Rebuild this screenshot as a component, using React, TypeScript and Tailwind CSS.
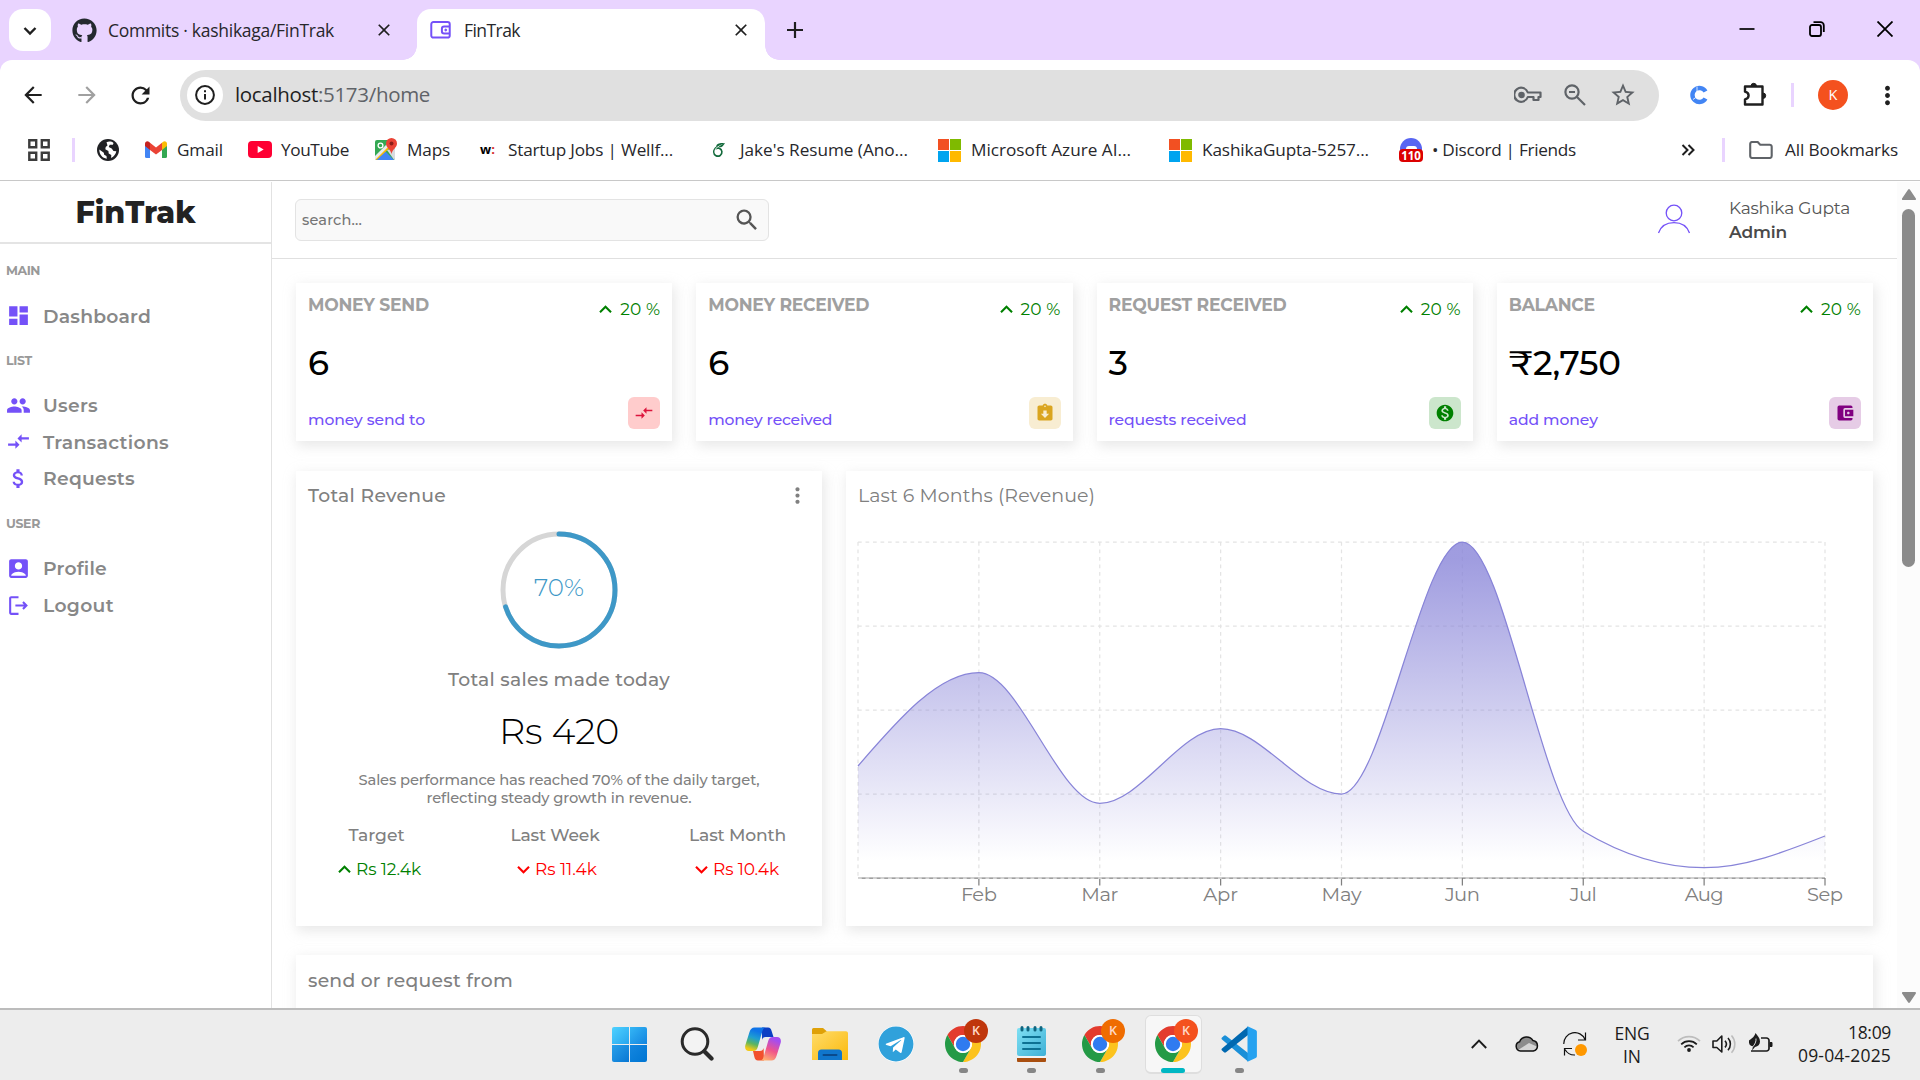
import { useLayoutEffect, useRef, useState, type ReactNode } from "react";
import {
  MdAccountBalanceWallet,
  MdAccountBox,
  MdArrowBack,
  MdArrowForward,
  MdAssignmentReturned,
  MdAttachMoney,
  MdClose,
  MdCompareArrows,
  MdDashboard,
  MdGroup,
  MdKeyboardArrowDown,
  MdKeyboardArrowUp,
  MdMonetizationOn,
  MdMoreVert,
  MdRefresh,
  MdSearch,
  MdStarBorder,
} from "react-icons/md";
import { FaGithub, FaTelegram } from "react-icons/fa";
import { SiOverleaf } from "react-icons/si";

/** One line of text whose letter spacing is adjusted so that it spans `w` pixels. */
function Fit({ w, className = "", children }: { w: number; className?: string; children: string }) {
  const ref = useRef<HTMLSpanElement>(null);
  const [spacing, setSpacing] = useState(0);
  useLayoutEffect(() => {
    const el = ref.current;
    if (el && children.length > 1) {
      setSpacing((w - el.getBoundingClientRect().width) / children.length);
    }
  }, [w, children]);
  return (
    <span
      ref={ref}
      className={`inline-block whitespace-pre leading-none ${className}`}
      style={{ letterSpacing: spacing }}
    >
      {children}
    </span>
  );
}

/* ---------- browser chrome ---------- */

function WalletFavicon() {
  return (
    <svg viewBox="0 0 24 20" className="h-[18px] w-[22px]" fill="none" stroke="#7451f8" strokeWidth="2.2">
      <rect x="1.2" y="1.2" width="20.5" height="17.2" rx="2.4" />
      <path d="M22 6h-6.5a2.5 2.5 0 0 0-2.5 2.500v3a2.500 2.500 0 0 0 2.500 2.500H22" />
      <circle cx="17.300" cy="10" r="1.100" fill="#7451f8" strokeWidth="1" />
    </svg>
  );
}

function TabStrip() {
  return (
    <div className="flex h-[60px] bg-[#e9d4ff]">
      <div className="ml-[9px] mt-[9px] flex h-[42px] w-[42px] items-center justify-center rounded-[14px] bg-white">
        <svg viewBox="0 0 14 10" className="mt-[1px] h-[10px] w-[14px]" fill="none" stroke="#1f1f1f" strokeWidth="2.4">
          <path d="M1.500 2l5.500 5.500L12.500 2" />
        </svg>
      </div>
      <div className="ml-[21px] flex h-[60px] w-[329px] items-center">
        <FaGithub className="h-[25px] w-[25px] text-[#24292f]" />
        <Fit w={226} className="ml-[11px] mt-[2px] text-[17.500px] text-[#27272b]">Commits · kashikaga/FinTrak</Fit>
        <MdClose className="ml-[40px] h-[20px] w-[20px] text-[#1f1f1f]" />
      </div>
      <div className="relative ml-[16px] mt-[9px] flex h-[51px] w-[348px] items-center rounded-t-[14px] bg-white">
        <div className="absolute -left-[14px] bottom-0 h-[14px] w-[14px] bg-[radial-gradient(circle_at_0_0,#e9d4ff_13.500px,#fff_14px)]" />
        <div className="absolute -right-[14px] bottom-0 h-[14px] w-[14px] bg-[radial-gradient(circle_at_100%_0,#e9d4ff_13.500px,#fff_14px)]" />
        <div className="-mt-[9px] ml-[13px] flex w-full items-center">
          <WalletFavicon />
          <Fit w={56} className="ml-[12px] mt-[2px] text-[17.500px] text-[#27272b]">FinTrak</Fit>
          <MdClose className="ml-[211px] h-[20px] w-[20px] text-[#1f1f1f]" />
        </div>
      </div>
      <svg viewBox="0 0 16 16" className="ml-[22px] mt-[22px] h-[16px] w-[16px]" stroke="#1f1f1f" strokeWidth="2.200">
        <path d="M8 0v16M0 8h16" />
      </svg>
      <div className="ml-auto mr-[27px] mt-[21px] flex items-start">
        <svg viewBox="0 0 16 16" className="h-[16px] w-[16px]" stroke="#000" strokeWidth="1.700">
          <path d="M0.500 8h15" />
        </svg>
        <svg viewBox="0 0 16 16" className="ml-[54px] h-[16px] w-[16px]" fill="none" stroke="#000" strokeWidth="1.800">
          <rect x="1" y="4" width="11" height="11" rx="2" />
          <path d="M4.500 1.200h7a3.300 3.300 0 0 1 3.300 3.300v6.500" />
        </svg>
        <svg viewBox="0 0 16 16" className="ml-[52px] h-[16px] w-[16px]" stroke="#000" strokeWidth="1.800">
          <path d="M0.500 0.500l15 15M15.500 0.500l-15 15" />
        </svg>
      </div>
    </div>
  );
}

function Toolbar() {
  return (
    <div className="bg-[#e9d4ff]">
      <div className="flex h-[70px] items-center rounded-t-[12px] bg-white">
        <MdArrowBack className="ml-[20px] h-[26px] w-[26px] text-[#1f1f1f]" />
        <MdArrowForward className="ml-[28px] h-[26px] w-[26px] text-[#a0a0a0]" />
        <MdRefresh className="ml-[27px] h-[27px] w-[27px] text-[#1f1f1f]" />
        <div className="ml-[26px] flex h-[51px] w-[1479px] items-center rounded-full bg-[#e0e0e0]">
          <div className="ml-[7px] flex h-[36px] w-[36px] items-center justify-center rounded-full bg-white">
            <svg viewBox="0 0 20 20" className="h-[20px] w-[20px]" fill="none" stroke="#1f1f1f" strokeWidth="2">
              <circle cx="10" cy="10" r="8.900" />
              <path d="M10 9v5.500M10 5.300v2" />
            </svg>
          </div>
          <div className="mb-[2px] ml-[12px] flex items-center text-[20.500px]">
            <Fit w={83} className="text-[#1f1f1f]">localhost</Fit>
            <Fit w={112} className="text-[#5f6368]">:5173/home</Fit>
          </div>
          <svg viewBox="0 0 28 18" className="ml-auto h-[18px] w-[28px]" fill="none" stroke="#5f6368" strokeWidth="2.200">
            <path d="M13.800 6.500H26.500v4.500h-2v3h-5v-3h-5.700A7 7 0 1 1 13.800 6.500z" strokeLinejoin="round" />
            <circle cx="7.500" cy="9" r="2.200" fill="#5f6368" />
          </svg>
          <svg viewBox="0 0 22 22" className="ml-[22px] h-[22px] w-[22px]" fill="none" stroke="#5f6368" strokeWidth="2.200">
            <circle cx="8" cy="8" r="6.600" />
            <path d="M13 13l8 8M5 8h6" />
          </svg>
          <MdStarBorder className="ml-[23px] mr-[22px] h-[28px] w-[28px] text-[#5f6368]" />
        </div>
        <svg viewBox="0 0 20 20" className="ml-[30px] h-[20px] w-[20px]" fill="none" stroke="#4285f4" strokeWidth="4.400">
          <path d="M16.500 6.500A7 7 0 1 0 16.500 13.500" />
          <path d="M8 1.500v5M4 14.500l3.500-2.500" stroke="#fff" strokeWidth="0.800" />
        </svg>
        <svg viewBox="0 0 26 26" className="ml-[33px] h-[26px] w-[26px]" fill="none" stroke="#1f1f1f" strokeWidth="2.400">
          <path d="M3 4.500h17.500v18H3v-5.200c2.300-.5 3.600-2 3.600-3.800S5.300 10.200 3 9.700z" strokeLinejoin="round" />
          <path d="M9 4a2.700 2.700 0 0 1 5.400 0zM21 11a2.700 2.700 0 0 1 0 5.400z" fill="#1f1f1f" strokeWidth="1" />
        </svg>
        <div className="ml-[23px] h-[24px] w-[3px] bg-[#e9d4ff]" />
        <div className="ml-[24px] flex h-[30px] w-[30px] items-center justify-center rounded-full bg-[#f4511e] text-[14.500px] text-white">K</div>
        <MdMoreVert className="ml-[25px] h-[29px] w-[29px] text-[#1f1f1f]" />
      </div>
    </div>
  );
}

function MicrosoftIcon() {
  return (
    <div className="grid h-[23px] w-[23px] grid-cols-2 gap-[1px]">
      <div className="bg-[#f25022]" />
      <div className="bg-[#7fba00]" />
      <div className="bg-[#00a4ef]" />
      <div className="bg-[#ffb900]" />
    </div>
  );
}

function Bookmark({ className, icon, gap, w, label }: { className: string; icon: ReactNode; gap: string; w: number; label: string }) {
  return (
    <div className={`flex shrink-0 items-center ${className}`}>
      {icon}
      <Fit w={w} className={`text-[17.200px] text-[#27272b] ${gap}`}>{label}</Fit>
    </div>
  );
}

function BookmarkBar() {
  return (
    <div className="flex h-[51px] items-center border-b border-[#c8c8c8] bg-white pb-[10px]">
      <svg viewBox="0 0 22 22" className="ml-[28px] h-[22px] w-[22px] shrink-0" fill="none" stroke="#3c3c3c" strokeWidth="2.400">
        <path d="M1.300 1.300h6.900v6.900H1.300zM13.800 1.300h6.900v6.900h-6.900zM1.300 13.800h6.900v6.900H1.300zM13.800 13.800h6.900v6.900h-6.900z" />
      </svg>
      <div className="ml-[22px] h-[24px] w-[3px] shrink-0 bg-[#e9d4ff]" />
      <svg viewBox="0 0 22 22" className="ml-[22px] h-[22px] w-[22px] shrink-0">
        <circle cx="11" cy="11" r="11" fill="#202124" />
        <path d="M9.500 3.200c2.500-1 5.300-.7 7 .8l-.6 1.800h-3.200l-1 2.200 3 1.500 1.800 2.500 2.800.3c-.4 2.800-2.300 5.300-5.200 6.600l.2-2.800-2.600-1.500-.3-2.600-3.100-1.800.4-2.300 1.800-1.300z" fill="#fff" />
        <path d="M2.300 10.500l4.500 3.200.4 2 2.300 1.300.3 2.700C5.500 19.200 2.200 15.500 2.300 10.500z" fill="#fff" />
      </svg>
      <Bookmark
        className="ml-[26px]"
        gap="ml-[10px]"
        w={46}
        label="Gmail"
        icon={
          <svg viewBox="0 0 22 17" className="h-[17px] w-[22px]">
            <path d="M0 2.500v13A1.500 1.500 0 0 0 1.500 17H5V6.500z" fill="#4285f4" />
            <path d="M17 17h3.500a1.500 1.500 0 0 0 1.500-1.500v-13l-5 4z" fill="#34a853" />
            <path d="M17 1.800V9l5-4V2.500c0-2-2.300-3.100-3.900-1.800z" fill="#fbbc04" />
            <path d="M5 9V1.800l6 4.600 6-4.600V9l-6 4.600z" fill="#ea4335" />
            <path d="M0 2.500V5l5 4V1.800L3.900.7C2.300-.6 0 .5 0 2.500z" fill="#c5221f" />
          </svg>
        }
      />
      <Bookmark
        className="ml-[25px]"
        gap="ml-[9px]"
        w={68}
        label="YouTube"
        icon={
          <svg viewBox="0 0 24 17" className="h-[17px] w-[24px]">
            <rect width="24" height="17" rx="4" fill="#ff0033" />
            <path d="M9.700 5l6 3.500-6 3.500z" fill="#fff" />
          </svg>
        }
      />
      <Bookmark
        className="ml-[26px]"
        gap="ml-[10px]"
        w={43}
        label="Maps"
        icon={
          <svg viewBox="0 0 22 24" className="h-[24px] w-[22px]">
            <rect y="2" width="20" height="20" rx="2" fill="#34a853" />
            <path d="M12 12l8-2v10a2 2 0 0 1-1 1.700z" fill="#d8dce0" />
            <path d="M10 13L1 22h18z" fill="#4285f4" />
            <path d="M0 20L16 4l3 2L1.500 22A2 2 0 0 1 0 20z" fill="#fbbc04" />
            <path d="M0 18l13-13 2 2L0 22z" fill="#e8eaed" />
            <circle cx="5.500" cy="7.500" r="2.400" fill="none" stroke="#fff" strokeWidth="1.300" />
            <path d="M16.500 0A5.500 5.500 0 0 0 11 5.500c0 4 4.500 5.500 5.500 10.500C17.500 11 22 9.500 22 5.500A5.500 5.500 0 0 0 16.500 0z" fill="#ea4335" />
            <circle cx="16.500" cy="5.500" r="2" fill="#8c1d18" />
          </svg>
        }
      />
      <Bookmark
        className="ml-[30px]"
        gap="ml-[12px]"
        w={165}
        label="Startup Jobs | Wellf..."
        icon={
          <div className="w-[16px] whitespace-nowrap text-[13px] font-bold leading-none text-black">
            w<span className="text-[#d42a2a]">:</span>
          </div>
        }
      />
      <Bookmark
        className="ml-[39px]"
        gap="ml-[14px]"
        w={168}
        label="Jake's Resume (Ano..."
        icon={<SiOverleaf className="h-[16px] w-[14px] text-[#11693a]" />}
      />
      <Bookmark className="ml-[30px]" gap="ml-[10px]" w={160} label="Microsoft Azure AI..." icon={<MicrosoftIcon />} />
      <Bookmark className="ml-[38px]" gap="ml-[10px]" w={167} label="KashikaGupta-5257..." icon={<MicrosoftIcon />} />
      <Bookmark
        className="ml-[30px]"
        gap="ml-[9px]"
        w={144}
        label="• Discord | Friends"
        icon={
          <div className="flex h-[24px] w-[24px] flex-col items-center">
            <div className="flex h-[12px] w-[22px] items-end justify-center rounded-t-full bg-[#5865f2]">
              <div className="h-[4px] w-[11px] rounded-t-[3px] bg-white" />
            </div>
            <div className="-mt-[1px] flex h-[14px] w-[24px] items-center justify-center rounded-[4px] bg-[#dc0000] text-[11.500px] font-bold leading-none text-white">110</div>
          </div>
        }
      />
      <svg viewBox="0 0 14 12" className="ml-[105px] h-[12px] w-[14px] shrink-0" fill="none" stroke="#1f1f1f" strokeWidth="2">
        <path d="M1.500 1l5 5-5 5M7.500 1l5 5-5 5" />
      </svg>
      <div className="ml-[27px] h-[24px] w-[3px] shrink-0 bg-[#e9d4ff]" />
      <Bookmark
        className="ml-[24px]"
        gap="ml-[12px]"
        w={113}
        label="All Bookmarks"
        icon={
          <svg viewBox="0 0 24 18" className="h-[18px] w-[24px]" fill="none" stroke="#5f6368" strokeWidth="2.100">
            <path d="M1.200 15V3a2 2 0 0 1 2-2h5.500l2.500 2.700h9.500a2 2 0 0 1 2 2V15a2 2 0 0 1-2 2H3.200a2 2 0 0 1-2-2z" />
          </svg>
        }
      />
    </div>
  );
}

/* ---------- app: sidebar and navbar ---------- */

function SideTitle({ h, w, children }: { h: string; w: number; children: string }) {
  return (
    <div className={`flex items-center pl-[6px] ${h}`}>
      <Fit w={w} className="text-[12.500px] font-bold text-[#999]">{children}</Fit>
    </div>
  );
}

function SideItem({ h, w, icon, children }: { h: string; w: number; icon: ReactNode; children: string }) {
  return (
    <div className={`flex items-center pl-[6px] ${h}`}>
      <span className="-mt-[1px] flex w-[37px] text-[#7451f8]">{icon}</span>
      <Fit w={w} className="mt-[2px] text-[18.750px] font-semibold text-[#888]">{children}</Fit>
    </div>
  );
}

function Sidebar() {
  const icon = "h-[25px] w-[25px]";
  return (
    <aside className="w-[272px] shrink-0 border-r border-[#e2e2e2]">
      <div className="flex h-[62px] items-center justify-center border-b-2 border-[#e4e4e4] pt-[1px]">
        <Fit w={120} className="text-[30px] font-extrabold text-[#222]">FinTrak</Fit>
      </div>
      <SideTitle h="h-[54px]" w={34}>MAIN</SideTitle>
      <SideItem h="h-[36px]" w={108} icon={<MdDashboard className={icon} />}>Dashboard</SideItem>
      <SideTitle h="h-[54px]" w={26}>LIST</SideTitle>
      <SideItem h="h-[35px]" w={55} icon={<MdGroup className={icon} />}>Users</SideItem>
      <SideItem h="h-[38px]" w={126} icon={<MdCompareArrows className={icon} />}>Transactions</SideItem>
      <SideItem h="h-[35px]" w={92} icon={<MdAttachMoney className={icon} />}>Requests</SideItem>
      <SideTitle h="h-[56px]" w={34}>USER</SideTitle>
      <SideItem h="h-[33px]" w={64} icon={<MdAccountBox className={icon} />}>Profile</SideItem>
      <SideItem
        h="h-[41px]"
        w={71}
        icon={
          <svg viewBox="0 0 24 24" className={icon} fill="currentColor">
            <path d="m17 8-1.410 1.410L17.170 11H9v2h8.170l-1.580 1.580L17 16l4-4-4-4zM5 5h7V3H5c-1.100 0-2 .9-2 2v14c0 1.100.9 2 2 2h7v-2H5V5z" />
          </svg>
        }
      >
        Logout
      </SideItem>
    </aside>
  );
}

function Navbar() {
  return (
    <div className="flex h-[77px] items-center border-b border-[#e0e0e0] pl-[23px]">
      <div className="flex h-[42px] w-[474px] items-center justify-between rounded-[6px] border border-[#e3e3e3] bg-[#f9f9f9] pl-[6px] pr-[7px]">
        <Fit w={60} className="text-[14.500px] font-medium text-[#757575]">search...</Fit>
        <MdSearch className="h-[28px] w-[28px] text-[#555]" />
      </div>
      <svg viewBox="0 0 34 30" className="ml-auto mt-[-3px] h-[30px] w-[34px]" fill="none" stroke="#7451f8" strokeWidth="1.300">
        <circle cx="17" cy="9" r="7.800" />
        <path d="M1.500 29C4 22 10 18.700 17 18.700S30 22 32.500 29" />
      </svg>
      <div className="ml-[38px] flex h-[48px] w-[168px] flex-col items-start">
        <Fit w={121} className="mt-[4px] text-[17px] text-[#555]">Kashika Gupta</Fit>
        <Fit w={58} className="mt-[7px] text-[17px] font-semibold text-[#4a4a4a]">Admin</Fit>
      </div>
    </div>
  );
}

/* ---------- app: widgets ---------- */

const cardShadow = "shadow-[2px_4px_12px_1px_rgba(190,190,190,0.36)]";

function Widget(props: { title: string; titleW: number; count: string; countW: number; link: string; linkW: number; tone: string; icon: ReactNode }) {
  return (
    <div className={`flex h-[158px] flex-1 justify-between bg-white px-[12px] ${cardShadow}`}>
      <div className="flex flex-col">
        <div className="mt-[12px] flex h-[20px] items-center">
          <Fit w={props.titleW} className="text-[17.200px] font-bold text-[#a0a0a0]">{props.title}</Fit>
        </div>
        <div className="mt-[28px] flex h-[40px] items-center">
          <Fit w={props.countW} className="text-[34px] font-medium text-black">{props.count}</Fit>
        </div>
        <div className="mt-[28px] flex h-[18px] items-center">
          <Fit w={props.linkW} className="text-[15.600px] font-medium text-[#7451f8]">{props.link}</Fit>
        </div>
      </div>
      <div className="flex flex-col items-end">
        <div className="mt-[14px] flex h-[25px] items-center text-[#008000]">
          <MdKeyboardArrowUp className="h-[25px] w-[25px]" />
          <Fit w={40} className="-mt-[1px] ml-[2px] text-[17px]">20 %</Fit>
        </div>
        <div className={`mt-[75px] flex h-[32px] w-[32px] items-center justify-center rounded-[6px] ${props.tone}`}>{props.icon}</div>
      </div>
    </div>
  );
}

function Widgets() {
  const icon = "h-[20px] w-[20px]";
  return (
    <div className="flex gap-[24px] pl-[24px] pr-[24px] pt-[24px]">
      <Widget title="MONEY SEND" titleW={121} count="6" countW={21} link="money send to" linkW={117} tone="bg-[#ffcccc] text-[#dc143c]" icon={<MdCompareArrows className={icon} />} />
      <Widget title="MONEY RECEIVED" titleW={161} count="6" countW={21} link="money received" linkW={124} tone="bg-[#f8edd2] text-[#daa520]" icon={<MdAssignmentReturned className={icon} />} />
      <Widget title="REQUEST RECEIVED" titleW={178} count="3" countW={20} link="requests received" linkW={138} tone="bg-[#cce6cc] text-[#008000]" icon={<MdMonetizationOn className={icon} />} />
      <Widget title="BALANCE" titleW={86} count="₹2,750" countW={112} link="add money" linkW={89} tone="bg-[#e6cce6] text-[#800080]" icon={<MdAccountBalanceWallet className={icon} />} />
    </div>
  );
}

/* ---------- app: revenue card ---------- */

function Ring() {
  const r = 56;
  const length = 2 * Math.PI * r;
  return (
    <div className="relative mt-[10px] h-[118px] w-[118px]">
      <svg viewBox="0 0 118 118" className="h-[118px] w-[118px] -rotate-90" fill="none" strokeWidth="5">
        <circle cx="59" cy="59" r={r} stroke="#d6d6d6" />
        <circle cx="59" cy="59" r={r} stroke="#3e98c7" strokeLinecap="round" strokeDasharray={`${length * 0.7} ${length}`} />
      </svg>
      <div className="absolute inset-0 flex items-center justify-center pb-[5px]">
        <Fit w={50} className="text-[24.500px] font-light text-[#3e98c7]">70%</Fit>
      </div>
    </div>
  );
}

function Summary(props: { className: string; title: string; titleW: number; value: string; valueW: number; up?: boolean }) {
  return (
    <div className={`flex flex-col ${props.className}`}>
      <div className="flex h-[24px] items-center justify-center">
        <Fit w={props.titleW} className="text-[17.200px] font-medium text-[#808080]">{props.title}</Fit>
      </div>
      <div className={`mt-[10px] flex h-[24px] items-center ${props.up ? "text-[#008000]" : "text-[#ff0000]"}`}>
        {props.up ? <MdKeyboardArrowUp className="h-[25px] w-[25px] shrink-0" /> : <MdKeyboardArrowDown className="h-[25px] w-[25px] shrink-0" />}
        <Fit w={props.valueW} className="-ml-[1px] text-[17px]">{props.value}</Fit>
      </div>
    </div>
  );
}

function RevenueCard() {
  return (
    <div className={`flex h-[455px] w-[526px] flex-col bg-white ${cardShadow}`}>
      <div className="flex h-[50px] items-center justify-between pl-[12px] pr-[12px]">
        <Fit w={138} className="text-[18.750px] font-medium text-[#808080]">Total Revenue</Fit>
        <MdMoreVert className="-mt-[2px] h-[25px] w-[25px] text-[#808080]" />
      </div>
      <div className="flex flex-col items-center">
        <Ring />
        <div className="flex h-[62px] items-center">
          <Fit w={222} className="text-[18.750px] font-medium text-[#808080]">Total sales made today</Fit>
        </div>
        <div className="flex h-[41px] items-center">
          <Fit w={120} className="text-[36.500px] font-light text-black">Rs 420</Fit>
        </div>
        <div className="mt-[19px] flex flex-col items-center">
          <div className="flex h-[18px] items-center">
            <Fit w={401} className="text-[14.700px] font-medium text-[#808080]">Sales performance has reached 70% of the daily target,</Fit>
          </div>
          <div className="flex h-[18px] items-center">
            <Fit w={265} className="text-[14.700px] font-medium text-[#808080]">reflecting steady growth in revenue.</Fit>
          </div>
        </div>
      </div>
      <div className="mt-[16px] flex">
        <Summary className="ml-[36px] w-[89px]" title="Target" titleW={56} value="Rs 12.4k" valueW={65} up />
        <Summary className="ml-[90px] w-[88px]" title="Last Week" titleW={89} value="Rs 11.4k" valueW={62} />
        <Summary className="ml-[90px] w-[97px]" title="Last Month" titleW={97} value="Rs 10.4k" valueW={66} />
      </div>
    </div>
  );
}

/* ---------- app: area chart ---------- */

const months = [
  { name: "", total: 1200, w: 0 },
  { name: "Feb", total: 2200, w: 36 },
  { name: "Mar", total: 800, w: 37 },
  { name: "Apr", total: 1600, w: 35 },
  { name: "May", total: 900, w: 40 },
  { name: "Jun", total: 3600, w: 35 },
  { name: "Jul", total: 500, w: 27 },
  { name: "Aug", total: 110, w: 39 },
  { name: "Sep", total: 450, w: 36 },
];

/** Monotone cubic curve through the points. */
function monotonePath(p: { x: number; y: number }[]) {
  const n = p.length;
  const slope = (i: number) => (p[i + 1].y - p[i].y) / (p[i + 1].x - p[i].x);
  const t: number[] = [];
  for (let i = 1; i < n - 1; i++) {
    const a = slope(i - 1);
    const b = slope(i);
    t[i] = (Math.sign(a) + Math.sign(b)) * Math.min(Math.abs(a), Math.abs(b), Math.abs((a + b) / 4)) || 0;
  }
  t[0] = (3 * slope(0) - t[1]) / 2;
  t[n - 1] = (3 * slope(n - 2) - t[n - 2]) / 2;
  let d = `M${p[0].x} ${p[0].y}`;
  for (let i = 0; i < n - 1; i++) {
    const h = (p[i + 1].x - p[i].x) / 3;
    d += `C${p[i].x + h} ${p[i].y + t[i] * h} ${p[i + 1].x - h} ${p[i + 1].y - t[i + 1] * h} ${p[i + 1].x} ${p[i + 1].y}`;
  }
  return d;
}

function AreaChart() {
  const left = 12;
  const right = 979;
  const top = 10;
  const bottom = 346;
  const xs = months.map((_, i) => left + ((right - left) * i) / 8);
  const points = months.map((m, i) => ({ x: xs[i], y: bottom - ((bottom - top) * m.total) / 3600 }));
  const line = monotonePath(points);
  return (
    <svg viewBox="0 0 1027 390" className="h-[390px] w-[1027px]">
      <defs>
        <linearGradient id="total" x1="0" y1="0" x2="0" y2="1">
          <stop offset="5%" stopColor="#8884d8" stopOpacity="0.8" />
          <stop offset="95%" stopColor="#8884d8" stopOpacity="0" />
        </linearGradient>
      </defs>
      <path d={`M${left} ${bottom}H${right}`} stroke="#808080" strokeWidth="1.250" />
      {xs.slice(1).map((x) => (
        <path key={x} d={`M${x} ${bottom}v7.500`} stroke="#808080" strokeWidth="1.250" />
      ))}
      <g stroke="#e4e4e4" strokeWidth="1.250" strokeDasharray="3.750 3.750">
        {[0, 1, 2, 3, 4].map((i) => (
          <path key={i} d={`M${left} ${top + ((bottom - top) * i) / 4}H${right}`} />
        ))}
        {xs.map((x) => (
          <path key={x} d={`M${x} ${top}V${bottom}`} />
        ))}
      </g>
      <path d={`${line}L${right} ${bottom}L${left} ${bottom}Z`} fill="url(#total)" />
      <path d={line} fill="none" stroke="#8884d8" strokeWidth="1.250" />
      {months.slice(1).map((m, i) => (
        <text key={m.name} x={xs[i + 1]} y="368.500" textAnchor="middle" textLength={m.w} fontSize="19.500" fill="#808080">
          {m.name}
        </text>
      ))}
    </svg>
  );
}

function ChartCard() {
  return (
    <div className={`h-[455px] w-[1027px] bg-white ${cardShadow}`}>
      <div className="flex h-[48px] items-center pl-[12px]">
        <Fit w={237} className="text-[19px] text-[#808080]">Last 6 Months (Revenue)</Fit>
      </div>
      <div className="mt-[13px]">
        <AreaChart />
      </div>
    </div>
  );
}

function Scrollbar() {
  return (
    <div className="flex w-[23px] shrink-0 flex-col items-center bg-[#fcfcfc]">
      <svg viewBox="0 0 14 11" className="mt-[7px] h-[11px] w-[14px]" fill="#8b8b8b">
        <path d="M6 .8a1.200 1.200 0 0 1 2 0l5.700 8.500A1 1 0 0 1 13 11H1a1 1 0 0 1-.8-1.700z" />
      </svg>
      <div className="mt-[9px] h-[358px] w-[13px] rounded-full bg-[#8b8b8b]" />
      <svg viewBox="0 0 14 11" className="mb-[5px] mt-auto h-[11px] w-[14px]" fill="#8b8b8b">
        <path d="M6 10.200a1.200 1.200 0 0 0 2 0l5.700-8.500A1 1 0 0 0 13 0H1a1 1 0 0 0-.8 1.700z" />
      </svg>
    </div>
  );
}

/* ---------- taskbar ---------- */

function ChromeIcon({ badge }: { badge: string }) {
  const arc = "M4.950 13A22 22 0 0 1 43.050 13H24A11 11 0 0 0 14.470 29.500Z";
  return (
    <div className="relative h-[36px] w-[36px]">
      <svg viewBox="2 2 44 44" className="h-[36px] w-[36px]">
        <circle cx="24" cy="24" r="12" fill="#fff" />
        <path d={arc} fill="#e33b2e" />
        <path d={arc} fill="#fcc31e" transform="rotate(120 24 24)" />
        <path d={arc} fill="#249a46" transform="rotate(240 24 24)" />
        <circle cx="24" cy="24" r="11" fill="#fff" />
        <circle cx="24" cy="24" r="8.800" fill="#2f7bf0" />
      </svg>
      <div className={`absolute -right-[7px] -top-[7px] flex h-[24px] w-[24px] items-center justify-center rounded-full text-[12.500px] font-semibold leading-none text-[#ffd9c8] ${badge}`}>K</div>
    </div>
  );
}

function TaskSlot({ className, dot, children }: { className: string; dot?: boolean; children: ReactNode }) {
  return (
    <div className={`flex shrink-0 flex-col items-center ${className}`}>
      <div className="mt-[14px] flex h-[40px] items-center">{children}</div>
      {dot && <div className="mt-[4px] h-[5px] w-[9px] rounded-full bg-[#868686]" />}
    </div>
  );
}

function Taskbar() {
  return (
    <div className="flex h-[72px] border-t-2 border-[#bcbcbc] bg-[#ededed] pl-[596px]">
      <TaskSlot className="w-[67px]">
        <div className="grid h-[35px] w-[35px] grid-cols-2 gap-[1px] overflow-hidden rounded-[2px]">
          <div className="bg-linear-to-br from-[#4fd2ff] to-[#25a5ee]" />
          <div className="bg-linear-to-br from-[#35b6f5] to-[#1284df]" />
          <div className="bg-linear-to-br from-[#27a0ea] to-[#0877d3]" />
          <div className="bg-linear-to-br from-[#1387e0] to-[#0075d2]" />
        </div>
      </TaskSlot>
      <TaskSlot className="w-[67px]">
        <svg viewBox="0 0 34 34" className="h-[34px] w-[34px]" fill="none" stroke="#2a2a2a">
          <circle cx="15" cy="14.500" r="12.800" strokeWidth="3" fill="#f3f3f3" />
          <path d="M24.500 24.500l7 7" strokeWidth="4.200" strokeLinecap="round" />
        </svg>
      </TaskSlot>
      <TaskSlot className="w-[66px]">
        <svg viewBox="0 0 36 34" className="h-[34px] w-[36px]">
          <defs>
            <linearGradient id="cpA" x1="0.600" y1="0" x2="0.300" y2="1">
              <stop offset="0.150" stopColor="#0f74e8" />
              <stop offset="0.450" stopColor="#1f9fd0" />
              <stop offset="0.700" stopColor="#5cb560" />
              <stop offset="0.950" stopColor="#f2c916" />
            </linearGradient>
            <linearGradient id="cpB" x1="0.700" y1="0" x2="0.300" y2="1">
              <stop offset="0.100" stopColor="#a44df0" />
              <stop offset="0.550" stopColor="#f0558a" />
              <stop offset="1" stopColor="#ffb070" />
            </linearGradient>
          </defs>
          <path d="M17 .5h6c2.200 0 3 1.500 3.600 3.500L28.500 10h-8c-2 0-3 1-3.500 3z" fill="#0b3fc4" />
          <path d="M19 33.500h-6c-2.200 0-3-1.500-3.600-3.500L8 24h7c2 0 3-1 3.600-3z" fill="#f2502d" />
          <path d="M9.500.5H21c-2 0-3 1.500-3.600 3.500L12.800 20c-.8 2.600-2 4-4.300 4H4c-3 0-4.600-2.500-3.600-6L4.500 5C5.500 2 7 .5 9.500.5z" fill="url(#cpA)" />
          <path d="M26.500 33.500H15c2 0 3-1.500 3.600-3.500l4.600-16c.8-2.600 2-4 4.300-4H32c3 0 4.600 2.500 3.600 6l-4.100 13c-1 3-2.500 4.500-5 4.500z" fill="url(#cpB)" />
        </svg>
      </TaskSlot>
      <TaskSlot className="w-[67px]">
        <svg viewBox="0 0 36 34" className="h-[34px] w-[36px]">
          <defs>
            <linearGradient id="fold" x1="0" y1="0" x2="1" y2="1">
              <stop offset="0" stopColor="#ffdc6a" />
              <stop offset="1" stopColor="#fbb90c" />
            </linearGradient>
          </defs>
          <path d="M0 8V2.500A1.500 1.500 0 0 1 1.500 1H11l4 3.500L12 8z" fill="#dfa108" />
          <path d="M0 7h10l4.500-2.800H34A2 2 0 0 1 36 6v27H0z" fill="url(#fold)" />
          <path d="M6 33V26a3.500 3.500 0 0 1 3.500-3.500h17A3.500 3.500 0 0 1 30 26v7z" fill="#1076cc" />
          <path d="M11.500 28h13" stroke="#0a4a8c" strokeWidth="2" strokeLinecap="round" />
        </svg>
      </TaskSlot>
      <TaskSlot className="w-[66px]">
        <div className="rounded-full bg-white">
          <FaTelegram className="h-[36px] w-[36px] text-[#30a1db]" />
        </div>
      </TaskSlot>
      <TaskSlot className="w-[68px]" dot>
        <ChromeIcon badge="bg-[#bf360c]" />
      </TaskSlot>
      <TaskSlot className="w-[68px]" dot>
        <svg viewBox="0 0 29 36" className="h-[36px] w-[29px]">
          <defs>
            <linearGradient id="note" x1="0" y1="0" x2="1" y2="1">
              <stop offset="0" stopColor="#7fe0f3" />
              <stop offset="1" stopColor="#3fb0d6" />
            </linearGradient>
          </defs>
          <rect y="31" width="29" height="5" rx="1" fill="#a94f10" />
          <rect y="29" width="29" height="3" fill="#f3f3f3" />
          <rect y="2" width="29" height="28" rx="2" fill="url(#note)" />
          <path d="M5 1.500v2.500M11 1.500v2.500M18 1.500v2.500M24 1.500v2.500" stroke="#10657f" strokeWidth="3" strokeLinecap="round" />
          <path d="M6 11h17M6 17h17M6 23h17" stroke="#0d7193" strokeWidth="2" strokeLinecap="round" />
        </svg>
      </TaskSlot>
      <TaskSlot className="w-[70px]" dot>
        <ChromeIcon badge="bg-[#ef6c00]" />
      </TaskSlot>
      <div className="flex w-[76px] shrink-0 justify-center pt-[5px]">
        <div className="flex h-[59px] w-[57px] flex-col items-center rounded-[6px] border border-b-2 border-[#dedede] bg-[#f7f7f7]">
          <div className="mt-[10px]">
            <ChromeIcon badge="bg-[#f4511e]" />
          </div>
          <div className="mt-[6px] h-[5px] w-[24px] shrink-0 rounded-full bg-[#00b7c3]" />
        </div>
      </div>
      <TaskSlot className="w-[56px]" dot>
        <svg viewBox="0 0 36 36" className="h-[36px] w-[36px]">
          <path d="M1 11.500l2-1.800a1.600 1.600 0 0 1 2 0L27 27v8.500L1 13.600a1.500 1.500 0 0 1 0-2.100z" fill="#1a8fd8" />
          <path d="M1 24.500l2 1.800a1.600 1.600 0 0 0 2 0L27 9V.5L1 22.400a1.500 1.500 0 0 0 0 2.100z" fill="#0068b0" />
          <path d="M26.500 35.800V.2L34.700 4a2 2 0 0 1 1.200 2v24a2 2 0 0 1-1.200 2z" fill="#26a2f0" />
        </svg>
      </TaskSlot>
      <div className="ml-[204px] flex h-[70px] items-center text-[#1b1b1b]">
        <svg viewBox="0 0 16 10" className="mb-[2px] h-[10px] w-[16px]" fill="none" stroke="#1b1b1b" strokeWidth="1.900">
          <path d="M.8 9L8 1.500 15.200 9" />
        </svg>
        <svg viewBox="0 0 24 17" className="mb-[3px] ml-[28px] h-[17px] w-[24px]">
          <path d="M5.500 16A4.700 4.700 0 0 1 4.600 6.800 7.500 7.500 0 0 1 18 5.600 5.300 5.300 0 0 1 18.300 16z" fill="#8c8c8c" />
          <path d="M3 15l11-7 9 4a5 5 0 0 1-4.500 4h-13z" fill="#d5d5d5" />
          <path d="M5.500 16A4.700 4.700 0 0 1 4.600 6.800 7.500 7.500 0 0 1 18 5.600 5.300 5.300 0 0 1 18.300 16z" fill="none" stroke="#111" strokeWidth="1.500" />
        </svg>
        <svg viewBox="0 0 24 24" className="mb-[2px] ml-[24px] h-[24px] w-[24px]" fill="none" stroke="#111" strokeWidth="1.200">
          <path d="M.8 12A11 11 0 0 1 22 7.500M22.500.5V8H15M1.500 23.500V16.500H9M2 17.500A11 11 0 0 0 12 23" />
          <circle cx="18" cy="18" r="6" fill="#ff9800" stroke="none" />
        </svg>
        <div className="ml-[27px] flex w-[36px] flex-col items-center text-[17.500px]">
          <Fit w={35}>ENG</Fit>
          <Fit w={18} className="mt-[6px]">IN</Fit>
        </div>
        <svg viewBox="0 0 24 18" className="mb-[4px] ml-[27px] h-[18px] w-[24px]" fill="none" strokeWidth="1.700">
          <path d="M1 7.200a15.500 15.500 0 0 1 22 0" stroke="#bdbdbd" />
          <path d="M4.200 10.300a11 11 0 0 1 15.600 0M7.400 13.300a6.500 6.500 0 0 1 9.200 0" stroke="#1b1b1b" />
          <circle cx="12" cy="16" r="1.900" fill="#1b1b1b" />
        </svg>
        <svg viewBox="0 0 24 20" className="mb-[3px] ml-[11px] h-[20px] w-[24px]" fill="none" stroke="#1b1b1b" strokeWidth="1.600">
          <path d="M1 7v6.500h3.800l5 4.500V2L4.800 7z" strokeLinejoin="round" />
          <path d="M13 6.800a5 5 0 0 1 0 6.600M16 4a9 9 0 0 1 0 12.200" />
          <path d="M19.500 1.500a13 13 0 0 1 0 17.300" stroke="#bdbdbd" />
        </svg>
        <svg viewBox="0 0 25 20" className="mb-[5px] ml-[12px] h-[20px] w-[25px]" fill="none" stroke="#1b1b1b" strokeWidth="1.700">
          <path d="M13 5h5.500A2.500 2.500 0 0 1 21 7.500v8a2.500 2.500 0 0 1-2.500 2.500H3" />
          <path d="M22 9.500h2v4h-2z" fill="#1b1b1b" strokeWidth="1" />
          <path d="M7.500 0c2 3 4.500 5 4.500 8.500 0 3-2 5-5 5.500l-3 3.500 1-4C2 13 .5 11 1 7.500 2.500 6 6 5 7.500 0z" fill="#1b1b1b" stroke="none" />
          <path d="M8 5.500c.3 3-1 6-3.500 8.500" stroke="#ededed" strokeWidth="0.900" />
        </svg>
        <div className="ml-[24px] flex w-[94px] flex-col items-end pb-[2px] text-[17.500px]">
          <Fit w={43}>18:09</Fit>
          <Fit w={93} className="mt-[6px]">09-04-2025</Fit>
        </div>
      </div>
    </div>
  );
}

export default function App() {
  return (
    <div className="flex h-[1080px] w-[1920px] flex-col overflow-hidden bg-white font-['Open_Sans','Noto_Sans',sans-serif]">
      <TabStrip />
      <Toolbar />
      <BookmarkBar />
      <div className="flex min-h-0 flex-1 overflow-hidden pt-[1px] font-['Montserrat','Inter',sans-serif]">
        <Sidebar />
        <main className="min-w-0 flex-1 overflow-hidden">
          <Navbar />
          <Widgets />
          <div className="flex gap-[24px] px-[24px] pt-[30px]">
            <RevenueCard />
            <ChartCard />
          </div>
          <div className="px-[24px] pt-[29px]">
            <div className={`flex h-[120px] bg-white pl-[12px] pt-[17px] ${cardShadow}`}>
              <Fit w={205} className="text-[18.750px] font-medium text-[#808080]">send or request from</Fit>
            </div>
          </div>
        </main>
        <Scrollbar />
      </div>
      <Taskbar />
    </div>
  );
}
